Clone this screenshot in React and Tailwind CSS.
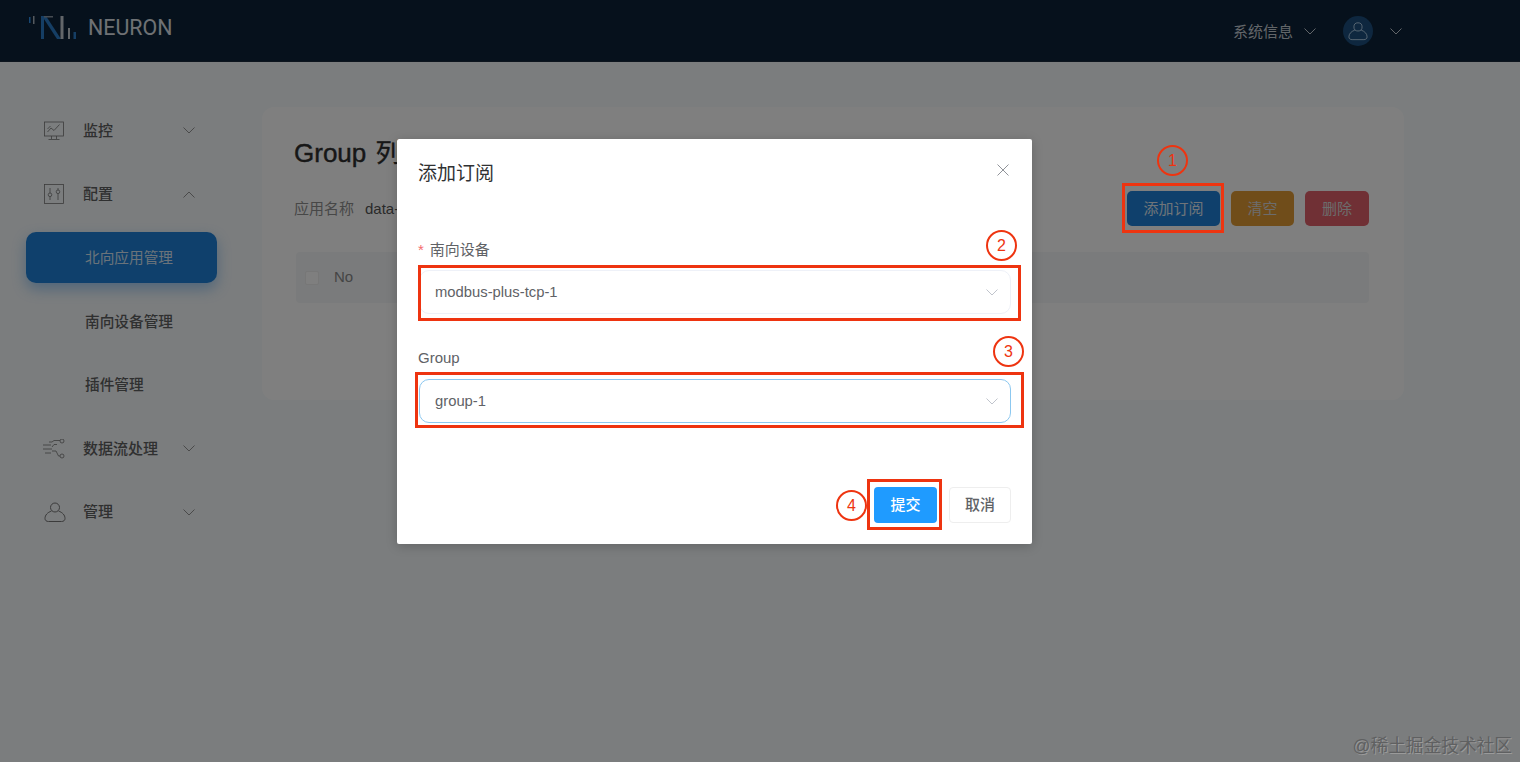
import React from "react";

const Chevron = ({ up = false, className = "" }) => (
  <svg width="12" height="7" viewBox="0 0 12 7" fill="none" stroke="currentColor" strokeWidth="1" className={className}>
    <path d={up ? "M0.5 6.5 L6 1 L11.5 6.5" : "M0.5 0.5 L6 6 L11.5 0.5"} />
  </svg>
);

const Logo = () => (
  <svg width="48" height="24" viewBox="0 0 48 24" className="-mt-[6px]">
    <rect x="0" y="1" width="1.5" height="6" fill="#2f8fe6" />
    <rect x="4" y="0" width="1.5" height="8" fill="#aab4bd" />
    <path d="M12 0 H15 V23 H12 Z" fill="#2a7cc8" />
    <path d="M13 0 H17 L32 23 H28 Z" fill="#2a7cc8" />
    <path d="M15 0 H24 V1.5 H15 Z" fill="#8d99a5" />
    <rect x="31.5" y="0" width="3" height="23" fill="#c5ccd3" />
    <rect x="39" y="12" width="2" height="11" fill="#c5ccd3" />
    <rect x="44.5" y="16" width="2.5" height="7" fill="#2a7cc8" />
  </svg>
);

const MonitorIcon = () => (
  <svg width="20" height="20" viewBox="0 0 20 20" fill="none" stroke="currentColor" strokeWidth="0.8">
    <rect x="0.5" y="1" width="19" height="14" />
    <path d="M3.5 11 L7 7 L10 9.5 L15.5 3.5" />
    <path d="M3.5 8 L6.5 5" />
    <path d="M7.5 15 V18 M12.5 15 V18 M4.5 18.5 H15.5" />
  </svg>
);

const SlidersIcon = () => (
  <svg width="20" height="20" viewBox="0 0 20 20" fill="none" stroke="currentColor" strokeWidth="0.8">
    <rect x="0.5" y="0.5" width="19" height="19" />
    <path d="M6 4 V9 M6 12.5 V16 M14 4 V6 M14 9.5 V16" />
    <circle cx="6" cy="10.8" r="1.8" />
    <circle cx="14" cy="7.8" r="1.8" />
  </svg>
);

const FlowIcon = () => (
  <svg width="22" height="20" viewBox="0 0 22 20" fill="none" stroke="currentColor" strokeWidth="0.8">
    <path d="M0 6 H8 M0 10 H9 M2 14 H8 M6 3 H9 L11 1.5 H17 M9 8 L11 5.5 H14 M9 12 H13 L15.5 17 H17" />
    <circle cx="19" cy="2" r="2" />
    <circle cx="19" cy="17" r="2" />
  </svg>
);

const UserIcon = ({ size = 22 }) => (
  <svg width={size} height={size} viewBox="0 0 22 22" fill="none" stroke="currentColor" strokeWidth="1">
    <circle cx="11" cy="6.5" r="4.5" />
    <path d="M7.5 10 C3.5 11.5 1 14 1 17.5 C1 19.5 2.5 20.5 4.5 20.5 H17.5 C19.5 20.5 21 19.5 21 17.5 C21 14 18.5 11.5 14.5 10" />
  </svg>
);

const menuTop = "flex items-center h-[63.5px] pl-[18px] pr-[22px] text-[15px] font-medium text-[#5f6061]";

const Sidebar = () => (
  <aside className="w-[262px] shrink-0 pl-[26px] pt-[37px]">
    <div className="w-[191px]">
      <div className={menuTop}>
        <span className="w-[20px] text-[#777]"><MonitorIcon /></span>
        <span className="ml-[19px] flex-1">监控</span>
        <Chevron className="text-[#959595]" />
      </div>
      <div className={menuTop}>
        <span className="w-[20px] text-[#777]"><SlidersIcon /></span>
        <span className="ml-[19px] flex-1">配置</span>
        <Chevron up className="text-[#959595]" />
      </div>
      <div className="h-[51px] mt-[6px] rounded-[10px] bg-[#1e80d8] shadow-[0_6px_14px_rgba(32,136,232,0.4)] flex items-center pl-[59px] text-[14.67px] text-[#d6e6f5]">
        北向应用管理
      </div>
      <div className="h-[77px] flex items-center pl-[59px] text-[14.67px] font-medium text-[#5f6061]">南向设备管理</div>
      <div className="h-[50px] flex items-center pl-[59px] text-[14.67px] font-medium text-[#5f6061]">插件管理</div>
      <div className={`${menuTop} mt-[7px]`}>
        <span className="w-[20px] -ml-[1px] mr-[1px] text-[#777]"><FlowIcon /></span>
        <span className="ml-[19px] flex-1">数据流处理</span>
        <Chevron className="text-[#959595]" />
      </div>
      <div className={menuTop}>
        <span className="w-[20px] text-[#777]"><UserIcon /></span>
        <span className="ml-[19px] flex-1">管理</span>
        <Chevron className="text-[#959595]" />
      </div>
    </div>
  </aside>
);

const Main = () => (
  <main className="w-[1142px] h-[293px] mt-[45px] rounded-[12px] bg-white pl-[32px] pr-[35px] pt-[28px]">
    <h1 className="text-[26px] leading-[36px] text-[#2e2e2e] [word-spacing:2px] [-webkit-text-stroke:0.4px_#2e2e2e]">Group 列表</h1>
    <div className="flex items-center mt-[19px] h-[37px] text-[15px]">
      <span className="pt-[1px] text-[#8f8f8f]">应用名称</span>
      <span className="ml-[11px] pt-[1px] text-[#555]">data-stream</span>
      <div className="ml-auto flex gap-[11px] text-[15px] text-[#d9d9d9]">
        <button className="w-[93px] h-[35px] pt-[1px] rounded-[5px] bg-[#1e80d8] text-[#dfe9f3]">添加订阅</button>
        <button className="w-[63px] h-[35px] pt-[1px] rounded-[5px] bg-[#e09a35]">清空</button>
        <button className="w-[64px] h-[35px] pt-[1px] rounded-[5px] bg-[#e0606a]">删除</button>
      </div>
    </div>
    <div className="flex items-center mt-[25px] ml-[2px] h-[51px] rounded-[4px] bg-[#f4f6f8] pl-[9px] text-[15px] font-medium text-[#8a8a8a]">
      <span className="w-[14px] h-[14px] rounded-[2px] bg-white border border-[#eeeeee]" />
      <span className="ml-[15px]">No</span>
    </div>
  </main>
);

const Select = ({ value, focused = false }) => (
  <div className={`h-[44px] rounded-[10px] border ${focused ? "border-[#8cc8f0]" : "border-[#eef1f8]"} flex items-center pl-[15px] pr-[12px] text-[14.8px] text-[#606266]`}>
    <span className="flex-1">{value}</span>
    <Chevron className="text-[#c0c4cc]" />
  </div>
);

const Dialog = () => (
  <div className="absolute left-[397px] top-[139px] w-[635px] h-[405px] rounded-[2px] bg-white shadow-[0_2px_12px_rgba(0,0,0,0.2)] px-[21px] flex flex-col">
    <div className="flex items-center justify-between h-[68px] pt-[2px]">
      <span className="text-[19px] text-[#303133]">添加订阅</span>
      <svg width="12" height="12" viewBox="0 0 12 12" stroke="#909399" strokeWidth="1" className="mr-[2px] -mt-[8px]">
        <path d="M0.5 0.5 L11.5 11.5 M11.5 0.5 L0.5 11.5" />
      </svg>
    </div>
    <div className="mt-[31px] h-[32px] text-[15px] leading-[24px] text-[#606266]">
      <span className="text-[#f56c6c] mr-[6px]">*</span>南向设备
    </div>
    <div className="w-[592px] ml-[1px]"><Select value="modbus-plus-tcp-1" /></div>
    <div className="mt-[32px] h-[33px] text-[15px] leading-[24px] text-[#606266]">Group</div>
    <div className="w-[592px] ml-[1px]"><Select value="group-1" focused /></div>
    <div className="flex justify-end gap-[12px] mt-[64px] text-[15px]">
      <button className="w-[63px] h-[36px] rounded-[4px] bg-[#1f9bff] text-white font-medium">提交</button>
      <button className="w-[62px] h-[36px] rounded-[4px] border border-[#eeeeee] bg-white text-[#606266] font-medium">取消</button>
    </div>
  </div>
);

const marks = [
  { key: "box1", cls: "left-[1122px] top-[183px] w-[102px] h-[50px]" },
  { key: "box2", cls: "left-[418px] top-[265px] w-[603px] h-[56px]" },
  { key: "box3", cls: "left-[415px] top-[372px] w-[609px] h-[56px]" },
  { key: "box4", cls: "left-[867px] top-[479px] w-[75px] h-[51px]" },
];

const circles = [
  { n: "1", cls: "left-[1157px] top-[145px]" },
  { n: "2", cls: "left-[986px] top-[230px]" },
  { n: "3", cls: "left-[993px] top-[336px]" },
  { n: "4", cls: "left-[836px] top-[490px]" },
];

export default function App() {
  return (
    <div
      className="relative w-full h-screen overflow-hidden bg-[#f6fafc]"
      style={{ fontFamily: '"Liberation Sans", "Noto Sans CJK SC", sans-serif' }}
    >
      <header className="h-[62px] bg-[#0c2238] border-b border-[#1a2a3c] flex items-center pl-[29px] pr-[118px] text-[15px] text-[#c5ccd3]">
        <Logo />
        <span className="ml-[11px] -mt-[4px] text-[21.4px] text-[#dfe3e8]" style={{ fontFamily: "Roboto, sans-serif" }}>NEURON</span>
        <span className="ml-auto mt-[3px]">系统信息</span>
        <Chevron className="ml-[11px] mt-[2px] text-[#c5ccd3]" />
        <span className="ml-[27px] w-[30px] h-[30px] rounded-full bg-[#1c4f7e] flex items-center justify-center text-[#b9d4ec]">
          <UserIcon size={20} />
        </span>
        <Chevron className="ml-[17px] mt-[2px] text-[#c5ccd3]" />
      </header>
      <div className="flex">
        <Sidebar />
        <Main />
      </div>

      {/* modal mask */}
      <div className="absolute inset-0 bg-black/50" />
      <Dialog />

      {/* red annotations drawn on top of the screenshot */}
      {marks.map((m) => (
        <div key={m.key} className={`absolute border-[3px] border-[#ee3410] ${m.cls}`} />
      ))}
      {circles.map((c) => (
        <div
          key={c.n}
          className={`absolute w-[31px] h-[31px] rounded-full border-2 border-[#ee3410] flex items-center justify-center text-[16px] text-[#ee3410] ${c.cls}`}
        >
          {c.n}
        </div>
      ))}
      <div className="absolute right-[8px] bottom-[2px] text-[17.7px] text-[#5f6061] [text-shadow:1px_1px_0_#9a9a9a]">
        @稀土掘金技术社区
      </div>
    </div>
  );
}
